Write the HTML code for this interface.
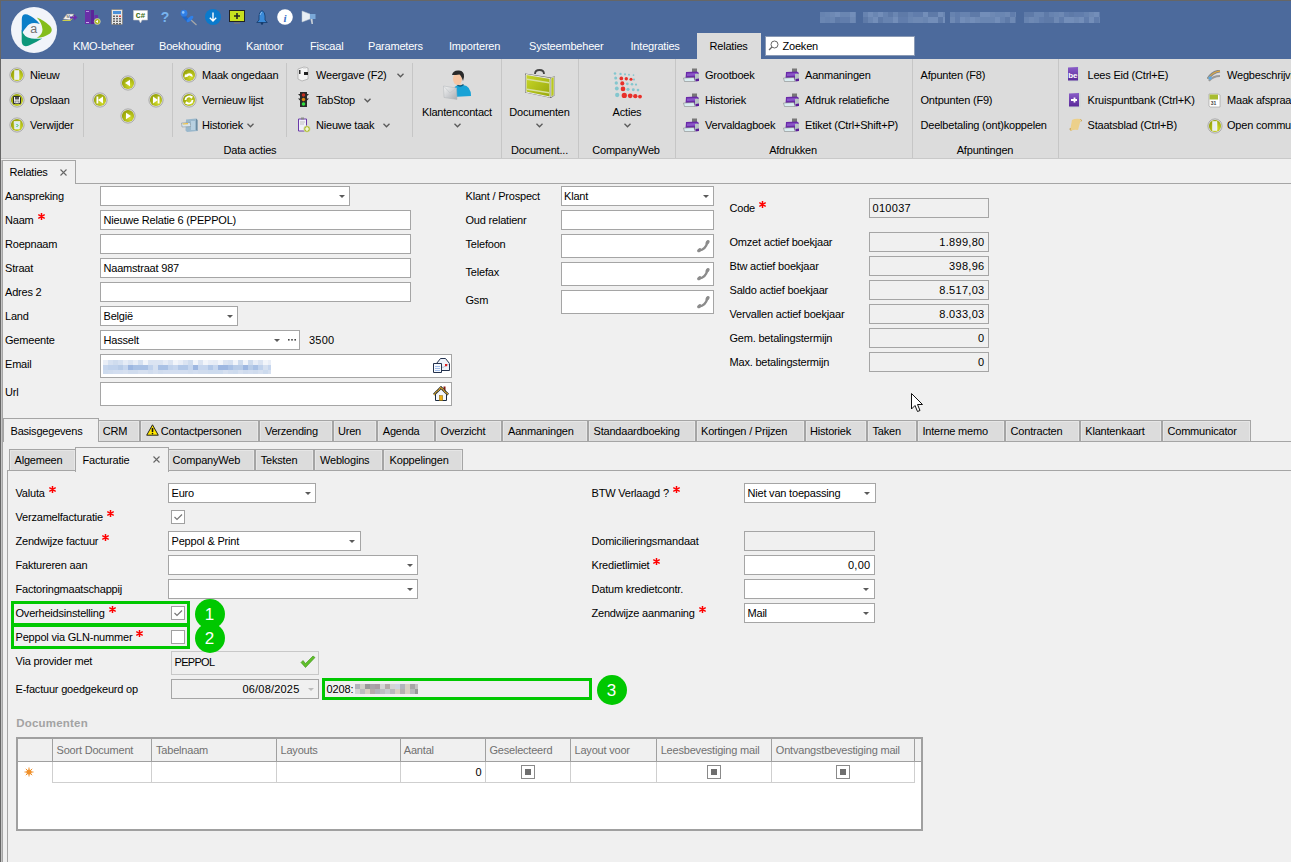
<!DOCTYPE html><html><head><meta charset="utf-8"><style>
*{margin:0;padding:0;box-sizing:content-box}
html,body{width:1291px;height:862px;overflow:hidden;background:#f0f0f0}
body{position:relative;font-family:"Liberation Sans",sans-serif;font-size:11px;color:#000}
div,svg{position:absolute}
.t{white-space:nowrap;line-height:12px;letter-spacing:-0.2px}
.w{color:#fff}
.inp{border:1px solid #a5a5a5;background:#fff}
.arr{width:0;height:0;border-left:3.5px solid transparent;border-right:3.5px solid transparent;border-top:3.5px solid #555}
.st{position:relative;display:inline-block;top:-4px;margin-left:4px;vertical-align:baseline}
.ic{position:absolute}
</style></head><body>
<svg style="left:0;top:0" width="0" height="0"><defs>
<radialGradient id="olv" cx="0.65" cy="0.7" r="0.8"><stop offset="0" stop-color="#d2dc2c"/><stop offset="1" stop-color="#8e9a05"/></radialGradient>
<linearGradient id="ring" x1="0" y1="0" x2="1" y2="1"><stop offset="0" stop-color="#c8c8c8"/><stop offset="1" stop-color="#9a9a9a"/></linearGradient>
<linearGradient id="purp" x1="0" y1="0" x2="0" y2="1"><stop offset="0" stop-color="#8a5cc8"/><stop offset="1" stop-color="#5a2a9a"/></linearGradient>
<linearGradient id="brief" x1="0" y1="0" x2="1" y2="1"><stop offset="0" stop-color="#cad82a"/><stop offset="1" stop-color="#98a80c"/></linearGradient>
<linearGradient id="env" x1="0" y1="0" x2="1" y2="1"><stop offset="0" stop-color="#f4f4f4"/><stop offset="1" stop-color="#a9adb2"/></linearGradient>
<linearGradient id="chk" x1="0" y1="0" x2="1" y2="1"><stop offset="0" stop-color="#9ae27a"/><stop offset="1" stop-color="#28a80e"/></linearGradient>
</defs></svg>
<div style="left:0px;top:0px;width:1291px;height:59px;background:#4c6a9c"></div>
<div style="left:0px;top:0px;width:1291px;height:1px;background:#666"></div>
<div style="left:0px;top:0px;width:1px;height:862px;background:#666"></div>
<svg style="left:11px;top:7px" width="46" height="46" viewBox="0 0 46 46"><circle cx="23" cy="23" r="23" fill="#f1f4fa"/><path d="M10.8 26.8 L10.8 12 Q10.8 6.2 16.5 7.6 Q23.5 10.5 28.8 17 Q19.5 14 15.5 20 Q12.3 23.5 10.8 26.8 Z" fill="#0a7dc8"/><path d="M25.7 10.4 Q33 13 39 19 Q42.5 23 39 26.5 Q33 30.5 25.7 31 Q31.5 27.5 31.5 22.5 Q31 15.5 25.7 10.4 Z" fill="#84bd1c"/><path d="M10.7 22.5 Q12.5 30.5 20.5 31.5 Q26 32 31.3 31.6 Q24 36 18 38.5 Q10.7 41 10.7 34 Z" fill="#0d977b"/><text x="22.8" y="26.3" font-family="Liberation Sans" font-size="12.5" fill="#707070" text-anchor="middle">a</text></svg>
<svg style="left:61px;top:12px" width="17" height="11" viewBox="0 0 17 11"><path d="M2 7 L6 2 H13 L9 8 Z" fill="#f4f4f4" stroke="#888" stroke-width=".6"/><path d="M1.5 8.5 H9.5 L13 4" stroke="#cdd04a" stroke-width="1" fill="none"/><text x="5.5" y="6" font-size="4" font-family="Liberation Sans" fill="#333">M</text><path d="M9 4.5 H13 V2.5 L16.5 5.5 L13 8.5 V6.5 H9 Z" fill="#6b2fb0"/></svg><svg style="left:85px;top:10px" width="16" height="15" viewBox="0 0 16 15"><rect x="0" y="0" width="5" height="14" fill="#6a2fa8"/><rect x="5.5" y="0" width="3.5" height="14" fill="#5a2598"/><rect x="9.5" y="5" width="3.5" height="9" fill="#6a2fa8"/><rect x="1" y="1" width="3" height=".8" fill="#c8b0e8"/><rect x="1" y="12" width="3" height="1" fill="#c8b0e8"/><circle cx="12.3" cy="11.5" r="3" fill="#a8b820" stroke="#ddd" stroke-width=".6"/><path d="M10.5 11.5 L13 10 V13 Z" fill="#fff"/></svg><svg style="left:111px;top:9px" width="12" height="16" viewBox="0 0 12 16"><rect x=".5" y=".5" width="11" height="15" rx="1" fill="#e6e6e6" stroke="#8a8a8a"/><rect x="2" y="2" width="8" height="3" fill="#4a90d8"/><rect x="2" y="6.5" width="2" height="1.5" fill="#666"/><rect x="5" y="6.5" width="2" height="1.5" fill="#666"/><rect x="8" y="6.5" width="2" height="1.5" fill="#e04040"/><rect x="2" y="9.0" width="2" height="1.5" fill="#666"/><rect x="5" y="9.0" width="2" height="1.5" fill="#666"/><rect x="8" y="9.0" width="2" height="1.5" fill="#666"/><rect x="2" y="11.5" width="2" height="1.5" fill="#666"/><rect x="5" y="11.5" width="2" height="1.5" fill="#666"/><rect x="8" y="11.5" width="2" height="1.5" fill="#666"/><rect x="2" y="14.0" width="2" height="1.5" fill="#666"/><rect x="5" y="14.0" width="2" height="1.5" fill="#666"/><rect x="8" y="14.0" width="2" height="1.5" fill="#666"/></svg><svg style="left:133px;top:10px" width="15" height="14" viewBox="0 0 15 14"><path d="M.5 .5 H14.5 V10 H9 L7.5 13 L6 10 H.5 Z" fill="#fff" stroke="#c8c8c8" stroke-width=".6"/><text x="7.5" y="8.3" font-size="8" font-weight="bold" font-family="Liberation Mono" fill="#3c6a12" style="-webkit-font-smoothing:antialiased" text-anchor="middle">C#</text></svg><svg style="left:160px;top:9px" width="10" height="14" viewBox="0 0 10 14"><text x="5" y="12.5" font-size="14" font-weight="bold" font-family="Liberation Sans" fill="#78b4f0" text-anchor="middle">?</text></svg><svg style="left:180px;top:9px" width="18" height="17" viewBox="0 0 18 17"><path d="M10.5 10.5 L16.5 16" stroke="#a8a8a8" stroke-width="1.2"/><path d="M3.2 6.8 L8.8 12.4" stroke="#1f66c8" stroke-width="3.2"/><ellipse cx="10" cy="10" rx="4.2" ry="1.8" transform="rotate(-45 10 10)" fill="#2f80e8"/><circle cx="4" cy="4.2" r="3.4" fill="#2f7ee6"/><circle cx="3.2" cy="3.4" r="1.3" fill="#8cc4ff"/></svg><svg style="left:205px;top:9px" width="16" height="16" viewBox="0 0 16 16"><circle cx="8" cy="8" r="8" fill="#0a7acc"/><path d="M8 3.5 V12 M4.8 8.8 L8 12 L11.2 8.8" stroke="#fff" stroke-width="1.4" fill="none"/></svg><svg style="left:229px;top:10px" width="16" height="14" viewBox="0 0 16 14"><rect x=".5" y=".5" width="15" height="11" fill="#c8e020" stroke="#222" stroke-width="1"/><path d="M8 3 V9 M5 6 H11" stroke="#222" stroke-width="1.6"/><rect x="5" y="12.5" width="6" height="1.3" fill="#777"/></svg><svg style="left:256px;top:10px" width="12" height="15" viewBox="0 0 12 15"><path d="M6 0.5 Q3 2 3 6 V10 L.8 12.5 H11.2 L9 10 V6 Q9 2 6 0.5 Z" fill="#3a8ad8" stroke="#143a6a" stroke-width=".8"/><path d="M4 5 Q4.5 3 6 2.2" stroke="#a8d0f8" stroke-width=".8" fill="none"/><circle cx="6" cy="13.5" r="1.2" fill="#143a6a"/></svg><svg style="left:277px;top:9px" width="16" height="16" viewBox="0 0 16 16"><circle cx="8" cy="8" r="7.8" fill="#fff"/><text x="8" y="12.5" font-size="11" font-style="italic" font-weight="bold" font-family="Liberation Serif" fill="#3a70c8" text-anchor="middle">i</text></svg><svg style="left:301px;top:9px" width="16" height="16" viewBox="0 0 16 16"><path d="M1 2 L9 5 V10 L1 13 Z" fill="#e8eef4" stroke="#b8c4d0" stroke-width=".5"/><path d="M9 5 H14.5 V10 H9 Z" fill="#7aa8d8"/><path d="M9.5 10 L10.5 15 H12 L11.5 10 Z" fill="#c8d0d8"/></svg>
<div style="left:820px;top:12px;width:5px;height:5px;background:rgba(175,198,230,0.28)"></div><div style="left:820px;top:17px;width:5px;height:6px;background:rgba(175,198,230,0.3)"></div><div style="left:825px;top:12px;width:5px;height:5px;background:rgba(175,198,230,0.3)"></div><div style="left:825px;top:17px;width:5px;height:6px;background:rgba(175,198,230,0.28)"></div><div style="left:830px;top:12px;width:5px;height:5px;background:rgba(175,198,230,0.34)"></div><div style="left:830px;top:17px;width:5px;height:6px;background:rgba(175,198,230,0.3)"></div><div style="left:835px;top:12px;width:5px;height:5px;background:rgba(175,198,230,0.4)"></div><div style="left:835px;top:17px;width:5px;height:6px;background:rgba(175,198,230,0.18)"></div><div style="left:840px;top:12px;width:5px;height:5px;background:rgba(175,198,230,0.3)"></div><div style="left:840px;top:17px;width:5px;height:6px;background:rgba(175,198,230,0.22)"></div><div style="left:845px;top:12px;width:5px;height:5px;background:rgba(175,198,230,0.3)"></div><div style="left:845px;top:17px;width:5px;height:6px;background:rgba(175,198,230,0.22)"></div><div style="left:850px;top:12px;width:5px;height:5px;background:rgba(175,198,230,0.4)"></div><div style="left:850px;top:17px;width:5px;height:6px;background:rgba(175,198,230,0.34)"></div><div style="left:855px;top:12px;width:1px;height:5px;background:rgba(175,198,230,0.3)"></div><div style="left:855px;top:17px;width:1px;height:6px;background:rgba(175,198,230,0.28)"></div><div style="left:863px;top:12px;width:5px;height:5px;background:rgba(175,198,230,0.28)"></div><div style="left:863px;top:17px;width:5px;height:6px;background:rgba(175,198,230,0.18)"></div><div style="left:868px;top:12px;width:5px;height:5px;background:rgba(175,198,230,0.4)"></div><div style="left:868px;top:17px;width:5px;height:6px;background:rgba(175,198,230,0.3)"></div><div style="left:873px;top:12px;width:5px;height:5px;background:rgba(175,198,230,0.3)"></div><div style="left:873px;top:17px;width:5px;height:6px;background:rgba(175,198,230,0.4)"></div><div style="left:878px;top:12px;width:5px;height:5px;background:rgba(175,198,230,0.4)"></div><div style="left:878px;top:17px;width:5px;height:6px;background:rgba(175,198,230,0.18)"></div><div style="left:883px;top:12px;width:5px;height:5px;background:rgba(175,198,230,0.28)"></div><div style="left:883px;top:17px;width:5px;height:6px;background:rgba(175,198,230,0.28)"></div><div style="left:888px;top:12px;width:5px;height:5px;background:rgba(175,198,230,0.18)"></div><div style="left:888px;top:17px;width:5px;height:6px;background:rgba(175,198,230,0.28)"></div><div style="left:893px;top:12px;width:5px;height:5px;background:rgba(175,198,230,0.3)"></div><div style="left:893px;top:17px;width:5px;height:6px;background:rgba(175,198,230,0.4)"></div><div style="left:898px;top:12px;width:5px;height:5px;background:rgba(175,198,230,0.18)"></div><div style="left:898px;top:17px;width:5px;height:6px;background:rgba(175,198,230,0.22)"></div><div style="left:903px;top:12px;width:5px;height:5px;background:rgba(175,198,230,0.18)"></div><div style="left:903px;top:17px;width:5px;height:6px;background:rgba(175,198,230,0.22)"></div><div style="left:908px;top:12px;width:5px;height:5px;background:rgba(175,198,230,0.28)"></div><div style="left:908px;top:17px;width:5px;height:6px;background:rgba(175,198,230,0.3)"></div><div style="left:913px;top:12px;width:5px;height:5px;background:rgba(175,198,230,0.22)"></div><div style="left:913px;top:17px;width:5px;height:6px;background:rgba(175,198,230,0.34)"></div><div style="left:918px;top:12px;width:5px;height:5px;background:rgba(175,198,230,0.22)"></div><div style="left:918px;top:17px;width:5px;height:6px;background:rgba(175,198,230,0.34)"></div><div style="left:923px;top:12px;width:5px;height:5px;background:rgba(175,198,230,0.4)"></div><div style="left:923px;top:17px;width:5px;height:6px;background:rgba(175,198,230,0.3)"></div><div style="left:928px;top:12px;width:5px;height:5px;background:rgba(175,198,230,0.18)"></div><div style="left:928px;top:17px;width:5px;height:6px;background:rgba(175,198,230,0.4)"></div><div style="left:933px;top:12px;width:5px;height:5px;background:rgba(175,198,230,0.18)"></div><div style="left:933px;top:17px;width:5px;height:6px;background:rgba(175,198,230,0.4)"></div><div style="left:938px;top:12px;width:5px;height:5px;background:rgba(175,198,230,0.4)"></div><div style="left:938px;top:17px;width:5px;height:6px;background:rgba(175,198,230,0.18)"></div><div style="left:943px;top:12px;width:2px;height:5px;background:rgba(175,198,230,0.3)"></div><div style="left:943px;top:17px;width:2px;height:6px;background:rgba(175,198,230,0.4)"></div><div style="left:950px;top:12px;width:5px;height:5px;background:rgba(175,198,230,0.28)"></div><div style="left:950px;top:17px;width:5px;height:6px;background:rgba(175,198,230,0.34)"></div><div style="left:955px;top:12px;width:5px;height:5px;background:rgba(175,198,230,0.22)"></div><div style="left:955px;top:17px;width:5px;height:6px;background:rgba(175,198,230,0.22)"></div><div style="left:960px;top:12px;width:5px;height:5px;background:rgba(175,198,230,0.28)"></div><div style="left:960px;top:17px;width:5px;height:6px;background:rgba(175,198,230,0.4)"></div><div style="left:965px;top:12px;width:5px;height:5px;background:rgba(175,198,230,0.28)"></div><div style="left:965px;top:17px;width:5px;height:6px;background:rgba(175,198,230,0.34)"></div><div style="left:970px;top:12px;width:5px;height:5px;background:rgba(175,198,230,0.18)"></div><div style="left:970px;top:17px;width:5px;height:6px;background:rgba(175,198,230,0.4)"></div><div style="left:975px;top:12px;width:5px;height:5px;background:rgba(175,198,230,0.18)"></div><div style="left:975px;top:17px;width:5px;height:6px;background:rgba(175,198,230,0.34)"></div><div style="left:980px;top:12px;width:5px;height:5px;background:rgba(175,198,230,0.4)"></div><div style="left:980px;top:17px;width:5px;height:6px;background:rgba(175,198,230,0.3)"></div><div style="left:985px;top:12px;width:5px;height:5px;background:rgba(175,198,230,0.4)"></div><div style="left:985px;top:17px;width:5px;height:6px;background:rgba(175,198,230,0.3)"></div><div style="left:990px;top:12px;width:5px;height:5px;background:rgba(175,198,230,0.34)"></div><div style="left:990px;top:17px;width:5px;height:6px;background:rgba(175,198,230,0.3)"></div><div style="left:995px;top:12px;width:5px;height:5px;background:rgba(175,198,230,0.3)"></div><div style="left:995px;top:17px;width:5px;height:6px;background:rgba(175,198,230,0.4)"></div><div style="left:1000px;top:12px;width:5px;height:5px;background:rgba(175,198,230,0.3)"></div><div style="left:1000px;top:17px;width:5px;height:6px;background:rgba(175,198,230,0.28)"></div><div style="left:1005px;top:12px;width:5px;height:5px;background:rgba(175,198,230,0.34)"></div><div style="left:1005px;top:17px;width:5px;height:6px;background:rgba(175,198,230,0.18)"></div><div style="left:1010px;top:12px;width:5px;height:5px;background:rgba(175,198,230,0.22)"></div><div style="left:1010px;top:17px;width:5px;height:6px;background:rgba(175,198,230,0.34)"></div><div style="left:1015px;top:12px;width:1px;height:5px;background:rgba(175,198,230,0.3)"></div><div style="left:1015px;top:17px;width:1px;height:6px;background:rgba(175,198,230,0.18)"></div><div style="left:1024px;top:12px;width:5px;height:5px;background:rgba(175,198,230,0.18)"></div><div style="left:1024px;top:17px;width:5px;height:6px;background:rgba(175,198,230,0.28)"></div><div style="left:1029px;top:12px;width:5px;height:5px;background:rgba(175,198,230,0.18)"></div><div style="left:1029px;top:17px;width:5px;height:6px;background:rgba(175,198,230,0.34)"></div><div style="left:1034px;top:12px;width:5px;height:5px;background:rgba(175,198,230,0.3)"></div><div style="left:1034px;top:17px;width:5px;height:6px;background:rgba(175,198,230,0.3)"></div><div style="left:1039px;top:12px;width:5px;height:5px;background:rgba(175,198,230,0.3)"></div><div style="left:1039px;top:17px;width:5px;height:6px;background:rgba(175,198,230,0.22)"></div><div style="left:1044px;top:12px;width:5px;height:5px;background:rgba(175,198,230,0.18)"></div><div style="left:1044px;top:17px;width:5px;height:6px;background:rgba(175,198,230,0.18)"></div><div style="left:1049px;top:12px;width:5px;height:5px;background:rgba(175,198,230,0.28)"></div><div style="left:1049px;top:17px;width:5px;height:6px;background:rgba(175,198,230,0.18)"></div><div style="left:1054px;top:12px;width:5px;height:5px;background:rgba(175,198,230,0.3)"></div><div style="left:1054px;top:17px;width:5px;height:6px;background:rgba(175,198,230,0.34)"></div><div style="left:1059px;top:12px;width:5px;height:5px;background:rgba(175,198,230,0.34)"></div><div style="left:1059px;top:17px;width:5px;height:6px;background:rgba(175,198,230,0.22)"></div><div style="left:1064px;top:12px;width:5px;height:5px;background:rgba(175,198,230,0.22)"></div><div style="left:1064px;top:17px;width:5px;height:6px;background:rgba(175,198,230,0.4)"></div><div style="left:1069px;top:12px;width:5px;height:5px;background:rgba(175,198,230,0.18)"></div><div style="left:1069px;top:17px;width:5px;height:6px;background:rgba(175,198,230,0.4)"></div><div style="left:1074px;top:12px;width:5px;height:5px;background:rgba(175,198,230,0.22)"></div><div style="left:1074px;top:17px;width:5px;height:6px;background:rgba(175,198,230,0.34)"></div><div style="left:1079px;top:12px;width:5px;height:5px;background:rgba(175,198,230,0.22)"></div><div style="left:1079px;top:17px;width:5px;height:6px;background:rgba(175,198,230,0.4)"></div><div style="left:1084px;top:12px;width:5px;height:5px;background:rgba(175,198,230,0.28)"></div><div style="left:1084px;top:17px;width:5px;height:6px;background:rgba(175,198,230,0.22)"></div><div style="left:1089px;top:12px;width:5px;height:5px;background:rgba(175,198,230,0.34)"></div><div style="left:1089px;top:17px;width:5px;height:6px;background:rgba(175,198,230,0.4)"></div><div style="left:1094px;top:12px;width:5px;height:5px;background:rgba(175,198,230,0.4)"></div><div style="left:1094px;top:17px;width:5px;height:6px;background:rgba(175,198,230,0.22)"></div><div style="left:1099px;top:12px;width:1px;height:5px;background:rgba(175,198,230,0.22)"></div><div style="left:1099px;top:17px;width:1px;height:6px;background:rgba(175,198,230,0.3)"></div>
<div class="t" style="left:73px;top:40px;color:#fff">KMO-beheer</div>
<div class="t" style="left:159px;top:40px;color:#fff">Boekhouding</div>
<div class="t" style="left:246px;top:40px;color:#fff">Kantoor</div>
<div class="t" style="left:310px;top:40px;color:#fff">Fiscaal</div>
<div class="t" style="left:368px;top:40px;color:#fff">Parameters</div>
<div class="t" style="left:449px;top:40px;color:#fff">Importeren</div>
<div class="t" style="left:529px;top:40px;color:#fff">Systeembeheer</div>
<div class="t" style="left:630.5px;top:40px;color:#fff">Integraties</div>
<div style="left:697px;top:33px;width:64px;height:26px;background:#dcdcdc"></div>
<div class="t" style="left:709.5px;top:40px;">Relaties</div>
<div style="left:765px;top:36px;width:148px;height:18px;background:#fff;border:1px solid #8a9ab5"></div>
<svg style="left:768px;top:40px" width="11" height="11"><circle cx="6.5" cy="4.5" r="3.5" fill="none" stroke="#666" stroke-width="1"/><path d="M4 7 L1 10" stroke="#666" stroke-width="1.3"/></svg>
<div class="t" style="left:782.5px;top:40px;">Zoeken</div>
<div style="left:1px;top:59px;width:1290px;height:99px;background:#dcdcdc"></div>
<div style="left:1px;top:158px;width:1290px;height:1px;background:#c9c9c9"></div>
<div style="left:501px;top:59px;width:1px;height:99px;background:#c6c6c6"></div>
<div style="left:578px;top:59px;width:1px;height:99px;background:#c6c6c6"></div>
<div style="left:675px;top:59px;width:1px;height:99px;background:#c6c6c6"></div>
<div style="left:912px;top:59px;width:1px;height:99px;background:#c6c6c6"></div>
<div style="left:1058px;top:59px;width:1px;height:99px;background:#c6c6c6"></div>
<div style="left:83px;top:63px;width:1px;height:74px;background:#c6c6c6"></div>
<div style="left:172px;top:63px;width:1px;height:74px;background:#c6c6c6"></div>
<div style="left:286px;top:63px;width:1px;height:74px;background:#c6c6c6"></div>
<div style="left:412px;top:63px;width:1px;height:74px;background:#c6c6c6"></div>
<div class="t" style="left:150.0px;top:144px;width:200px;text-align:center;">Data acties</div>
<div class="t" style="left:439.5px;top:144px;width:200px;text-align:center;">Document...</div>
<div class="t" style="left:526.0px;top:144px;width:200px;text-align:center;">CompanyWeb</div>
<div class="t" style="left:693.0px;top:144px;width:200px;text-align:center;">Afdrukken</div>
<div class="t" style="left:885.0px;top:144px;width:200px;text-align:center;">Afpuntingen</div>
<div class="t" style="left:30px;top:69px;">Nieuw</div>
<div class="t" style="left:30px;top:94px;">Opslaan</div>
<div class="t" style="left:30px;top:119px;">Verwijder</div>
<div class="t" style="left:202px;top:69px;">Maak ongedaan</div>
<div class="t" style="left:202px;top:94px;">Vernieuw lijst</div>
<div class="t" style="left:202px;top:119px;">Historiek</div>
<svg class="ic" style="left:246.5px;top:122.5px" width="7" height="5"><path d="M0.5 0.8 L3.5 3.8 L6.5 0.8" fill="none" stroke="#5a5a5a" stroke-width="1.3"/></svg>
<div class="t" style="left:316px;top:69px;">Weergave (F2)</div>
<div class="t" style="left:316px;top:94px;">TabStop</div>
<div class="t" style="left:316px;top:119px;">Nieuwe taak</div>
<svg class="ic" style="left:396.5px;top:72.5px" width="7" height="5"><path d="M0.5 0.8 L3.5 3.8 L6.5 0.8" fill="none" stroke="#5a5a5a" stroke-width="1.3"/></svg>
<svg class="ic" style="left:363.5px;top:97.5px" width="7" height="5"><path d="M0.5 0.8 L3.5 3.8 L6.5 0.8" fill="none" stroke="#5a5a5a" stroke-width="1.3"/></svg>
<svg class="ic" style="left:382.5px;top:122.5px" width="7" height="5"><path d="M0.5 0.8 L3.5 3.8 L6.5 0.8" fill="none" stroke="#5a5a5a" stroke-width="1.3"/></svg>
<div class="t" style="left:357.0px;top:106px;width:200px;text-align:center;">Klantencontact</div>
<svg class="ic" style="left:453.5px;top:122.5px" width="7" height="5"><path d="M0.5 0.8 L3.5 3.8 L6.5 0.8" fill="none" stroke="#5a5a5a" stroke-width="1.3"/></svg>
<div class="t" style="left:439.5px;top:106px;width:200px;text-align:center;">Documenten</div>
<svg class="ic" style="left:536.0px;top:122.5px" width="7" height="5"><path d="M0.5 0.8 L3.5 3.8 L6.5 0.8" fill="none" stroke="#5a5a5a" stroke-width="1.3"/></svg>
<div class="t" style="left:527.0px;top:106px;width:200px;text-align:center;">Acties</div>
<svg class="ic" style="left:623.5px;top:122.5px" width="7" height="5"><path d="M0.5 0.8 L3.5 3.8 L6.5 0.8" fill="none" stroke="#5a5a5a" stroke-width="1.3"/></svg>
<div class="t" style="left:705px;top:69px;">Grootboek</div>
<div class="t" style="left:705px;top:94px;">Historiek</div>
<div class="t" style="left:705px;top:119px;">Vervaldagboek</div>
<div class="t" style="left:805px;top:69px;">Aanmaningen</div>
<div class="t" style="left:805px;top:94px;">Afdruk relatiefiche</div>
<div class="t" style="left:805px;top:119px;">Etiket (Ctrl+Shift+P)</div>
<div class="t" style="left:920.5px;top:69px;">Afpunten (F8)</div>
<div class="t" style="left:920.5px;top:94px;">Ontpunten (F9)</div>
<div class="t" style="left:920.5px;top:119px;">Deelbetaling (ont)koppelen</div>
<div class="t" style="left:1087.5px;top:69px;">Lees Eid (Ctrl+E)</div>
<div class="t" style="left:1087.5px;top:94px;">Kruispuntbank (Ctrl+K)</div>
<div class="t" style="left:1087.5px;top:119px;">Staatsblad (Ctrl+B)</div>
<div class="t" style="left:1227px;top:69px;">Wegbeschrijving</div>
<div class="t" style="left:1227px;top:94px;">Maak afspraak</div>
<div class="t" style="left:1227px;top:119px;">Open communicator</div>
<svg style="left:9px;top:67px" width="16" height="16" viewBox="0 0 16 16"><circle cx="8" cy="8" r="7.1" fill="#e4e4e4" stroke="#a8a8a8" stroke-width="1"/><circle cx="8" cy="8" r="6.1" fill="url(#olv)"/><path d="M5.5 3.5 H10 V12.5 H5.5 Z" fill="#e8eef4" stroke="#fff" stroke-width=".5"/></svg><svg style="left:9px;top:92px" width="16" height="16" viewBox="0 0 16 16"><circle cx="8" cy="8" r="7.1" fill="#e4e4e4" stroke="#a8a8a8" stroke-width="1"/><circle cx="8" cy="8" r="6.1" fill="url(#olv)"/><path d="M4.5 4.5 H10.5 L11.5 5.5 V11.5 H4.5 Z" fill="#f2f2f2" stroke="#2a2a2a" stroke-width="1"/><rect x="6" y="5" width="4" height="2.5" fill="#555"/><rect x="6" y="9" width="4" height="2.5" fill="#ddd" stroke="#444" stroke-width=".5"/></svg><svg style="left:9px;top:117px" width="16" height="16" viewBox="0 0 16 16"><circle cx="8" cy="8" r="7.1" fill="#e4e4e4" stroke="#a8a8a8" stroke-width="1"/><circle cx="8" cy="8" r="6.1" fill="url(#olv)"/><path d="M5 4.5 H11 L10.3 12 H5.7 Z" fill="#d8ecf8" stroke="#f8f8f8" stroke-width=".6"/><path d="M7.5 7 L9 8.5 L7.5 10" stroke="#3cb83c" stroke-width="1" fill="none"/></svg><svg style="left:120px;top:75px" width="16" height="16" viewBox="0 0 16 16"><circle cx="8" cy="8" r="7.1" fill="#e4e4e4" stroke="#a8a8a8" stroke-width="1"/><circle cx="8" cy="8" r="6.1" fill="url(#olv)"/><path d="M5 8 L10 4.8 V11.2 Z" fill="#fff"/></svg><svg style="left:92px;top:92px" width="16" height="16" viewBox="0 0 16 16"><circle cx="8" cy="8" r="7.1" fill="#e4e4e4" stroke="#a8a8a8" stroke-width="1"/><circle cx="8" cy="8" r="6.1" fill="url(#olv)"/><rect x="4.5" y="4.5" width="1.8" height="7" fill="#fff"/><path d="M6 8 L11 4.5 V11.5 Z" fill="#fff"/></svg><svg style="left:148px;top:92px" width="16" height="16" viewBox="0 0 16 16"><circle cx="8" cy="8" r="7.1" fill="#e4e4e4" stroke="#a8a8a8" stroke-width="1"/><circle cx="8" cy="8" r="6.1" fill="url(#olv)"/><rect x="9.7" y="4.5" width="1.8" height="7" fill="#fff"/><path d="M10 8 L5 4.5 V11.5 Z" fill="#fff"/></svg><svg style="left:120px;top:108px" width="16" height="16" viewBox="0 0 16 16"><circle cx="8" cy="8" r="7.1" fill="#e4e4e4" stroke="#a8a8a8" stroke-width="1"/><circle cx="8" cy="8" r="6.1" fill="url(#olv)"/><path d="M11 8 L6 4.8 V11.2 Z" fill="#fff"/></svg><svg style="left:181px;top:67px" width="16" height="16" viewBox="0 0 16 16"><circle cx="8" cy="8" r="7.1" fill="#e4e4e4" stroke="#a8a8a8" stroke-width="1"/><circle cx="8" cy="8" r="6.1" fill="url(#olv)"/><path d="M4 9 Q6 5.5 9.5 6.5 Q12 7.5 11.5 10 L9.5 9 Q8.5 8 6.5 9.5 Z" fill="#fff"/><path d="M3.5 10.5 L4 7 L7 9.5 Z" fill="#fff"/></svg><svg style="left:181px;top:92px" width="16" height="16" viewBox="0 0 16 16"><circle cx="8" cy="8" r="7.1" fill="#e4e4e4" stroke="#a8a8a8" stroke-width="1"/><circle cx="8" cy="8" r="6.1" fill="url(#olv)"/><path d="M4.5 8 A3.5 3.5 0 0 1 10.5 5.5" stroke="#fff" stroke-width="1.8" fill="none"/><path d="M11.5 8 A3.5 3.5 0 0 1 5.5 10.5" stroke="#fff" stroke-width="1.8" fill="none"/><path d="M9 3.5 L12 4.5 L10.5 7 Z M7 12.5 L4 11.5 L5.5 9 Z" fill="#fff"/></svg><svg style="left:181px;top:118px" width="17" height="15" viewBox="0 0 17 15"><path d="M5 1.5 L15 0.5 L16.5 2 V13 L6 14 L4.5 12.5 Z" fill="#9ab8cc"/><path d="M15 0.5 L16.5 2 V13 L15 12 Z" fill="#6a8aa0"/><path d="M0.5 5 L9 4.5 L10 8.5 L1 9 Z" fill="#d8e4ec" stroke="#7a8a94" stroke-width=".5"/><path d="M1.5 5.5 L7 5 V6.3 L2 6.6 Z" fill="#f0c040"/><rect x="10" y="3" width="4" height="9" fill="#b8d0e0"/></svg><svg style="left:296px;top:66px" width="14" height="16" viewBox="0 0 14 16"><path d="M2 3 L8 1 L12 2 V13 L6 15 L2 13 Z" fill="#f4f4f4" stroke="#999" stroke-width=".6"/><rect x="3" y="4" width="1.5" height="4" fill="#333"/><rect x="8" y="6" width="4" height="3" fill="#222"/><path d="M7 0.5 H10 V2.5 H7 Z" fill="#ccc"/></svg><svg style="left:298px;top:91px" width="11" height="17" viewBox="0 0 11 17"><path d="M2 1 H9 V16 H2 Z" fill="#2a2a2a"/><path d="M0 3 H2 V5 Z M11 3 H9 V5 Z M0 7.5 H2 V9.5 Z M11 7.5 H9 V9.5 Z" fill="#2a2a2a"/><circle cx="5.5" cy="4" r="1.7" fill="#c83020"/><circle cx="5.5" cy="8.5" r="1.7" fill="#e08a10"/><circle cx="5.5" cy="13" r="1.8" fill="#30e040"/></svg><svg style="left:297px;top:117px" width="14" height="16" viewBox="0 0 14 16"><path d="M1.5 2 H9.5 V14 H1.5 Z" fill="#f0f0f8" stroke="#6a3aa8" stroke-width="1"/><rect x="4" y=".5" width="3" height="2" fill="#888"/><path d="M3 5 H8 M3 7 H7" stroke="#aaa" stroke-width=".7"/><circle cx="10" cy="12" r="3.3" fill="#b0c030" stroke="#e0e0e0" stroke-width=".6"/><path d="M10 10 V14 M8 12 H12" stroke="#fff" stroke-width="1.2"/></svg><svg style="left:436px;top:64px" width="40" height="40" viewBox="0 0 40 40"><path d="M16.5 33 Q16 23 22 21 L27 21 Q35 22 35 32 Z" fill="#18a2d6"/><path d="M21 20.5 Q24 23.5 27.5 20.5" stroke="#0a5a80" stroke-width="1.2" fill="#f4c4a0"/><ellipse cx="21.5" cy="15" rx="4.5" ry="6" fill="#f6c6a4"/><path d="M16 11 Q17 6 23 6.5 Q28.5 7 28 13 L27 17 Q25.5 12 23.5 10.5 Q20 11 16 11 Z" fill="#2a2a2a"/><path d="M7.5 22 L20.5 24 L21 35.5 L8 33.5 Z" fill="url(#env)" stroke="#b0b4b8" stroke-width=".5"/><path d="M7.5 22 L14 29 L20.5 24" stroke="#c0c4c8" stroke-width=".6" fill="none"/></svg><svg style="left:519px;top:64px" width="40" height="40" viewBox="0 0 40 40"><path d="M16 10 Q16 6 20.5 6 Q25 6 25 10" stroke="#444" stroke-width="1.8" fill="none"/><path d="M6 9.5 L32 13.5 L35.5 12 L35.5 31.5 L32 34 L6 28.5 Z" fill="#666"/><path d="M7 10.5 L31 14.5 V33 L7 28 Z" fill="url(#brief)" stroke="#e8e8e8" stroke-width="1"/><path d="M32 14 L35 12.8 V31 L32 33 Z" fill="#b8c820" stroke="#ddd" stroke-width=".7"/><path d="M8 14.5 L30 18 V19.5 L8 16 Z M8 24.5 L30 28 V29.5 L8 26 Z" fill="#d8e0a0"/></svg><svg style="left:607px;top:64px" width="40" height="40" viewBox="0 0 40 40"><circle cx="8" cy="9.5" r="1.28" fill="#84c6ce"/><circle cx="13.5" cy="9.9" r="1.18" fill="#84c6ce"/><circle cx="18" cy="10.3" r="1.08" fill="#84c6ce"/><circle cx="22" cy="10.7" r="0.97" fill="#84c6ce"/><circle cx="26.5" cy="11.1" r="0.87" fill="#84c6ce"/><circle cx="8.7" cy="14.0" r="1.52" fill="#84c6ce"/><circle cx="14.3" cy="14.4" r="1.84" fill="#e8302a"/><circle cx="19.3" cy="14.8" r="1.68" fill="#e8302a"/><circle cx="24" cy="15.2" r="1.52" fill="#e8302a"/><circle cx="27" cy="15.6" r="1.03" fill="#84c6ce"/><circle cx="9.3" cy="19.0" r="1.68" fill="#84c6ce"/><circle cx="15.3" cy="19.4" r="2.03" fill="#e8302a"/><circle cx="20.3" cy="19.8" r="1.41" fill="#84c6ce"/><circle cx="25" cy="20.2" r="1.28" fill="#84c6ce"/><circle cx="29" cy="20.6" r="1.14" fill="#84c6ce"/><circle cx="9.8" cy="24.5" r="1.92" fill="#84c6ce"/><circle cx="16" cy="24.9" r="2.32" fill="#e8302a"/><circle cx="21" cy="25.3" r="1.61" fill="#84c6ce"/><circle cx="26.3" cy="25.7" r="1.46" fill="#84c6ce"/><circle cx="31" cy="26.1" r="1.31" fill="#84c6ce"/><circle cx="10.2" cy="31.0" r="2.16" fill="#84c6ce"/><circle cx="17.3" cy="31.4" r="2.61" fill="#e8302a"/><circle cx="23.2" cy="31.8" r="2.38" fill="#e8302a"/><circle cx="28.3" cy="32.2" r="2.15" fill="#e8302a"/><circle cx="33" cy="32.6" r="1.93" fill="#e8302a"/></svg><svg style="left:683px;top:68px" width="18" height="14" viewBox="0 0 18 14"><rect x="9" y="0.5" width="5" height="5" fill="#777"/><path d="M3 4 L14 3.5 L16 5 V12 L4 12.5 L2.5 11 Z" fill="#6a2aa8"/><path d="M4 5.5 L14 5 L14.5 7.5 L4 8 Z" fill="#8a56c8"/><path d="M0.5 10 L11 9.5 L12 13.5 L1.5 13.5 Z" fill="#d8ecf0" stroke="#777" stroke-width=".5"/><path d="M12 6 L16 5.5 V12.5 L12 13 Z" fill="#b8c4c4"/><path d="M12.5 11 L16 10.5 V13 L12.5 13.5 Z" fill="#5a1a98"/></svg><svg style="left:683px;top:93px" width="18" height="14" viewBox="0 0 18 14"><rect x="9" y="0.5" width="5" height="5" fill="#777"/><path d="M3 4 L14 3.5 L16 5 V12 L4 12.5 L2.5 11 Z" fill="#6a2aa8"/><path d="M4 5.5 L14 5 L14.5 7.5 L4 8 Z" fill="#8a56c8"/><path d="M0.5 10 L11 9.5 L12 13.5 L1.5 13.5 Z" fill="#d8ecf0" stroke="#777" stroke-width=".5"/><path d="M12 6 L16 5.5 V12.5 L12 13 Z" fill="#b8c4c4"/><path d="M12.5 11 L16 10.5 V13 L12.5 13.5 Z" fill="#5a1a98"/></svg><svg style="left:683px;top:118px" width="18" height="14" viewBox="0 0 18 14"><rect x="9" y="0.5" width="5" height="5" fill="#777"/><path d="M3 4 L14 3.5 L16 5 V12 L4 12.5 L2.5 11 Z" fill="#6a2aa8"/><path d="M4 5.5 L14 5 L14.5 7.5 L4 8 Z" fill="#8a56c8"/><path d="M0.5 10 L11 9.5 L12 13.5 L1.5 13.5 Z" fill="#d8ecf0" stroke="#777" stroke-width=".5"/><path d="M12 6 L16 5.5 V12.5 L12 13 Z" fill="#b8c4c4"/><path d="M12.5 11 L16 10.5 V13 L12.5 13.5 Z" fill="#5a1a98"/></svg><svg style="left:783px;top:68px" width="18" height="14" viewBox="0 0 18 14"><rect x="9" y="0.5" width="5" height="5" fill="#777"/><path d="M3 4 L14 3.5 L16 5 V12 L4 12.5 L2.5 11 Z" fill="#6a2aa8"/><path d="M4 5.5 L14 5 L14.5 7.5 L4 8 Z" fill="#8a56c8"/><path d="M0.5 10 L11 9.5 L12 13.5 L1.5 13.5 Z" fill="#d8ecf0" stroke="#777" stroke-width=".5"/><path d="M12 6 L16 5.5 V12.5 L12 13 Z" fill="#b8c4c4"/><path d="M12.5 11 L16 10.5 V13 L12.5 13.5 Z" fill="#5a1a98"/></svg><svg style="left:783px;top:93px" width="18" height="14" viewBox="0 0 18 14"><rect x="9" y="0.5" width="5" height="5" fill="#777"/><path d="M3 4 L14 3.5 L16 5 V12 L4 12.5 L2.5 11 Z" fill="#6a2aa8"/><path d="M4 5.5 L14 5 L14.5 7.5 L4 8 Z" fill="#8a56c8"/><path d="M0.5 10 L11 9.5 L12 13.5 L1.5 13.5 Z" fill="#d8ecf0" stroke="#777" stroke-width=".5"/><path d="M12 6 L16 5.5 V12.5 L12 13 Z" fill="#b8c4c4"/><path d="M12.5 11 L16 10.5 V13 L12.5 13.5 Z" fill="#5a1a98"/></svg><svg style="left:783px;top:118px" width="18" height="14" viewBox="0 0 18 14"><rect x="9" y="0.5" width="5" height="5" fill="#777"/><path d="M3 4 L14 3.5 L16 5 V12 L4 12.5 L2.5 11 Z" fill="#6a2aa8"/><path d="M4 5.5 L14 5 L14.5 7.5 L4 8 Z" fill="#8a56c8"/><path d="M0.5 10 L11 9.5 L12 13.5 L1.5 13.5 Z" fill="#d8ecf0" stroke="#777" stroke-width=".5"/><path d="M12 6 L16 5.5 V12.5 L12 13 Z" fill="#b8c4c4"/><path d="M12.5 11 L16 10.5 V13 L12.5 13.5 Z" fill="#5a1a98"/></svg><svg style="left:1067px;top:66px" width="14" height="17" viewBox="0 0 14 17"><path d="M1 1.5 L11 0.5 L12.5 2 V15.5 L2.5 16 L1 14.5 Z" fill="#d0d8d8"/><path d="M1 1.5 L11 1 V14.5 L1 14.5 Z" fill="url(#purp)"/><text x="5.8" y="11.5" font-size="8" font-weight="bold" font-family="Liberation Sans" fill="#fff" text-anchor="middle">be</text></svg><svg style="left:1068px;top:92px" width="14" height="17" viewBox="0 0 14 17"><path d="M1 1.5 L11 0.5 L12.5 2 V15.5 L2.5 16 L1 14.5 Z" fill="#d0d8d8"/><path d="M1 1.5 L11 1 V14.5 L1 14.5 Z" fill="url(#purp)"/><path d="M3 8 H9 M6.5 5.5 V10.5" stroke="#fff" stroke-width="1.8"/></svg><svg style="left:1068px;top:118px" width="15" height="14" viewBox="0 0 15 14"><path d="M4 2 Q7 0 13 1 L10 12 Q7 11 2 13 Z" fill="#ecd08a"/><path d="M3 12.5 Q1 11 2.5 10 M12.5 1.5 Q14.5 2 13 3.5" stroke="#c8a050" stroke-width="1" fill="none"/></svg><svg style="left:1207px;top:70px" width="14" height="12" viewBox="0 0 14 12"><path d="M1 9 Q5 2 13 1" stroke="#888" stroke-width="3" fill="none"/><path d="M1 9 Q5 2 13 1" stroke="#f0b030" stroke-width="1" fill="none"/><path d="M2 11 Q6 6 13 6" stroke="#999" stroke-width="2" fill="none"/><circle cx="3" cy="8" r="1.8" fill="#5aa8e8"/></svg><svg style="left:1208px;top:92px" width="13" height="16" viewBox="0 0 13 16"><path d="M1 2 H10 L12 3 V15 H2 L1 14 Z" fill="#fff" stroke="#999" stroke-width=".6"/><rect x="1.5" y="2.5" width="8.5" height="5" fill="#a8bc30"/><text x="5.5" y="13" font-size="5" font-weight="bold" font-family="Liberation Sans" fill="#444" text-anchor="middle">31</text></svg><svg style="left:1206.5px;top:117.5px" width="16" height="16" viewBox="0 0 16 16"><circle cx="8" cy="8" r="7.1" fill="#e4e4e4" stroke="#a8a8a8" stroke-width="1"/><circle cx="8" cy="8" r="6.1" fill="url(#olv)"/><path d="M5.5 3.5 H10 V12.5 H5.5 Z" fill="#e8eef4" stroke="#fff" stroke-width=".5"/></svg>
<div style="left:2px;top:160px;width:72px;height:23px;background:#f0f0f0;border:1px solid #a5a5a5;border-bottom:none"></div>
<div style="left:75px;top:183px;width:1216px;height:1px;background:#a5a5a5"></div>
<div class="t" style="left:9.5px;top:166px;">Relaties</div>
<svg style="left:59.5px;top:169px" width="7" height="7"><path d="M0.5 0.5 L6.5 6.5 M6.5 0.5 L0.5 6.5" stroke="#666" stroke-width="1.1"/></svg>
<div class="t" style="left:5px;top:190px;">Aanspreking</div>
<div class="t" style="left:5px;top:214px;">Naam<svg class="st" width="7" height="7" viewBox="0 0 7 7"><path d="M3.5 0 V7 M0.3 1.6 L6.7 5.4 M0.3 5.4 L6.7 1.6" stroke="#f00" stroke-width="1.5"/></svg></div>
<div class="t" style="left:5px;top:238px;">Roepnaam</div>
<div class="t" style="left:5px;top:262px;">Straat</div>
<div class="t" style="left:5px;top:286px;">Adres 2</div>
<div class="t" style="left:5px;top:310px;">Land</div>
<div class="t" style="left:5px;top:334px;">Gemeente</div>
<div class="t" style="left:5px;top:358px;">Email</div>
<div class="t" style="left:5px;top:386px;">Url</div>
<div class="inp" style="left:100px;top:186px;width:248px;height:18px;background:#fff;border-color:#a5a5a5"></div>
<div class="arr" style="left:338.5px;top:194.5px;border-top-color:#5a5a5a"></div>
<div class="inp" style="left:100px;top:210px;width:309px;height:18px;background:#fff;border-color:#a5a5a5"></div>
<div class="t" style="left:103.5px;top:214px;">Nieuwe Relatie 6 (PEPPOL)</div>
<div class="inp" style="left:100px;top:234px;width:309px;height:18px;background:#fff;border-color:#a5a5a5"></div>
<div class="inp" style="left:100px;top:258px;width:309px;height:18px;background:#fff;border-color:#a5a5a5"></div>
<div class="t" style="left:103.5px;top:262px;">Naamstraat 987</div>
<div class="inp" style="left:100px;top:282px;width:309px;height:18px;background:#fff;border-color:#a5a5a5"></div>
<div class="inp" style="left:100px;top:306px;width:136px;height:18px;background:#fff;border-color:#a5a5a5"></div>
<div class="t" style="left:103.5px;top:310px;">België</div>
<div class="arr" style="left:226.5px;top:314.5px;border-top-color:#5a5a5a"></div>
<div class="inp" style="left:100px;top:330px;width:198px;height:18px;background:#fff;border-color:#a5a5a5"></div>
<div class="t" style="left:103.5px;top:334px;">Hasselt</div>
<div class="arr" style="left:273.5px;top:338.5px;border-top-color:#5a5a5a"></div>
<svg style="left:288px;top:339px" width="9" height="2"><rect x="0" y="0" width="1.6" height="1.6" fill="#444"/><rect x="3.2" y="0" width="1.6" height="1.6" fill="#444"/><rect x="6.4" y="0" width="1.6" height="1.6" fill="#444"/></svg>
<div class="t" style="left:309px;top:334px;letter-spacing:0.2px">3500</div>
<div class="inp" style="left:100px;top:354px;width:350px;height:22px;background:#fff;border-color:#a5a5a5"></div>
<div style="left:103px;top:360px;width:5px;height:5px;background:#e9eef7"></div><div style="left:103px;top:365px;width:5px;height:5px;background:#c6d6ee"></div><div style="left:103px;top:370px;width:5px;height:4px;background:#cddbee"></div><div style="left:108px;top:360px;width:5px;height:5px;background:#d6e1f1"></div><div style="left:108px;top:365px;width:5px;height:5px;background:#c0d2ec"></div><div style="left:108px;top:370px;width:5px;height:4px;background:#d0dcee"></div><div style="left:113px;top:360px;width:5px;height:5px;background:#cfdcee"></div><div style="left:113px;top:365px;width:5px;height:5px;background:#c0d2ec"></div><div style="left:113px;top:370px;width:5px;height:4px;background:#d3def0"></div><div style="left:118px;top:360px;width:5px;height:5px;background:#d6e1f1"></div><div style="left:118px;top:365px;width:5px;height:5px;background:#b8cce8"></div><div style="left:118px;top:370px;width:5px;height:4px;background:#d3def0"></div><div style="left:123px;top:360px;width:5px;height:5px;background:#e6ecf6"></div><div style="left:123px;top:365px;width:5px;height:5px;background:#c6d6ee"></div><div style="left:123px;top:370px;width:5px;height:4px;background:#d6e0f0"></div><div style="left:128px;top:360px;width:5px;height:5px;background:#dbe4f2"></div><div style="left:128px;top:365px;width:5px;height:5px;background:#9db7e1"></div><div style="left:128px;top:370px;width:5px;height:4px;background:#d0dcee"></div><div style="left:133px;top:360px;width:5px;height:5px;background:#e9eef7"></div><div style="left:133px;top:365px;width:5px;height:5px;background:#a9c1e5"></div><div style="left:133px;top:370px;width:5px;height:4px;background:#d0dcee"></div><div style="left:138px;top:360px;width:5px;height:5px;background:#d6e1f1"></div><div style="left:138px;top:365px;width:5px;height:5px;background:#a9c1e5"></div><div style="left:138px;top:370px;width:5px;height:4px;background:#d6e0f0"></div><div style="left:143px;top:360px;width:5px;height:5px;background:#f2f5fa"></div><div style="left:143px;top:365px;width:5px;height:5px;background:#a9c1e5"></div><div style="left:143px;top:370px;width:5px;height:4px;background:#d6e0f0"></div><div style="left:148px;top:360px;width:5px;height:5px;background:#dbe4f2"></div><div style="left:148px;top:365px;width:5px;height:5px;background:#c0d2ec"></div><div style="left:148px;top:370px;width:5px;height:4px;background:#d0dcee"></div><div style="left:153px;top:360px;width:5px;height:5px;background:#dbe4f2"></div><div style="left:153px;top:365px;width:5px;height:5px;background:#d5e0f0"></div><div style="left:153px;top:370px;width:5px;height:4px;background:#d6e0f0"></div><div style="left:158px;top:360px;width:5px;height:5px;background:#dbe4f2"></div><div style="left:158px;top:365px;width:5px;height:5px;background:#a9c1e5"></div><div style="left:158px;top:370px;width:5px;height:4px;background:#d0dcee"></div><div style="left:163px;top:360px;width:5px;height:5px;background:#e6ecf6"></div><div style="left:163px;top:365px;width:5px;height:5px;background:#a9c1e5"></div><div style="left:163px;top:370px;width:5px;height:4px;background:#d3def0"></div><div style="left:168px;top:360px;width:5px;height:5px;background:#dbe4f2"></div><div style="left:168px;top:365px;width:5px;height:5px;background:#c0d2ec"></div><div style="left:168px;top:370px;width:5px;height:4px;background:#d3def0"></div><div style="left:173px;top:360px;width:5px;height:5px;background:#f2f5fa"></div><div style="left:173px;top:365px;width:5px;height:5px;background:#c6d6ee"></div><div style="left:173px;top:370px;width:5px;height:4px;background:#d3def0"></div><div style="left:178px;top:360px;width:5px;height:5px;background:#e9eef7"></div><div style="left:178px;top:365px;width:5px;height:5px;background:#b2c8e8"></div><div style="left:178px;top:370px;width:5px;height:4px;background:#d3def0"></div><div style="left:183px;top:360px;width:5px;height:5px;background:#dbe4f2"></div><div style="left:183px;top:365px;width:5px;height:5px;background:#b2c8e8"></div><div style="left:183px;top:370px;width:5px;height:4px;background:#d3def0"></div><div style="left:188px;top:360px;width:5px;height:5px;background:#cfdcee"></div><div style="left:188px;top:365px;width:5px;height:5px;background:#c6d6ee"></div><div style="left:188px;top:370px;width:5px;height:4px;background:#d0dcee"></div><div style="left:193px;top:360px;width:5px;height:5px;background:#f2f5fa"></div><div style="left:193px;top:365px;width:5px;height:5px;background:#9db7e1"></div><div style="left:193px;top:370px;width:5px;height:4px;background:#d3def0"></div><div style="left:198px;top:360px;width:5px;height:5px;background:#dbe4f2"></div><div style="left:198px;top:365px;width:5px;height:5px;background:#c6d6ee"></div><div style="left:198px;top:370px;width:5px;height:4px;background:#d0dcee"></div><div style="left:203px;top:360px;width:5px;height:5px;background:#f2f5fa"></div><div style="left:203px;top:365px;width:5px;height:5px;background:#c6d6ee"></div><div style="left:203px;top:370px;width:5px;height:4px;background:#d0dcee"></div><div style="left:208px;top:360px;width:5px;height:5px;background:#e9eef7"></div><div style="left:208px;top:365px;width:5px;height:5px;background:#b2c8e8"></div><div style="left:208px;top:370px;width:5px;height:4px;background:#cddbee"></div><div style="left:213px;top:360px;width:5px;height:5px;background:#e6ecf6"></div><div style="left:213px;top:365px;width:5px;height:5px;background:#c6d6ee"></div><div style="left:213px;top:370px;width:5px;height:4px;background:#cddbee"></div><div style="left:218px;top:360px;width:5px;height:5px;background:#f2f5fa"></div><div style="left:218px;top:365px;width:5px;height:5px;background:#9db7e1"></div><div style="left:218px;top:370px;width:5px;height:4px;background:#cddbee"></div><div style="left:223px;top:360px;width:5px;height:5px;background:#dbe4f2"></div><div style="left:223px;top:365px;width:5px;height:5px;background:#9db7e1"></div><div style="left:223px;top:370px;width:5px;height:4px;background:#d6e0f0"></div><div style="left:228px;top:360px;width:5px;height:5px;background:#d6e1f1"></div><div style="left:228px;top:365px;width:5px;height:5px;background:#a9c1e5"></div><div style="left:228px;top:370px;width:5px;height:4px;background:#d0dcee"></div><div style="left:233px;top:360px;width:5px;height:5px;background:#f2f5fa"></div><div style="left:233px;top:365px;width:5px;height:5px;background:#b8cce8"></div><div style="left:233px;top:370px;width:5px;height:4px;background:#cddbee"></div><div style="left:238px;top:360px;width:5px;height:5px;background:#cfdcee"></div><div style="left:238px;top:365px;width:5px;height:5px;background:#b8cce8"></div><div style="left:238px;top:370px;width:5px;height:4px;background:#d6e0f0"></div><div style="left:243px;top:360px;width:5px;height:5px;background:#f2f5fa"></div><div style="left:243px;top:365px;width:5px;height:5px;background:#9db7e1"></div><div style="left:243px;top:370px;width:5px;height:4px;background:#d0dcee"></div><div style="left:248px;top:360px;width:5px;height:5px;background:#cfdcee"></div><div style="left:248px;top:365px;width:5px;height:5px;background:#b8cce8"></div><div style="left:248px;top:370px;width:5px;height:4px;background:#d3def0"></div><div style="left:253px;top:360px;width:5px;height:5px;background:#e9eef7"></div><div style="left:253px;top:365px;width:5px;height:5px;background:#a9c1e5"></div><div style="left:253px;top:370px;width:5px;height:4px;background:#d0dcee"></div><div style="left:258px;top:360px;width:5px;height:5px;background:#dbe4f2"></div><div style="left:258px;top:365px;width:5px;height:5px;background:#c0d2ec"></div><div style="left:258px;top:370px;width:5px;height:4px;background:#d6e0f0"></div><div style="left:263px;top:360px;width:5px;height:5px;background:#f2f5fa"></div><div style="left:263px;top:365px;width:5px;height:5px;background:#d5e0f0"></div><div style="left:263px;top:370px;width:5px;height:4px;background:#cddbee"></div><div style="left:268px;top:360px;width:3px;height:5px;background:#e9eef7"></div><div style="left:268px;top:365px;width:3px;height:5px;background:#c6d6ee"></div><div style="left:268px;top:370px;width:3px;height:4px;background:#d6e0f0"></div>
<div class="inp" style="left:100px;top:382px;width:350px;height:22px;background:#fff;border-color:#a5a5a5"></div>
<div class="t" style="left:465.5px;top:190px;">Klant / Prospect</div>
<div class="t" style="left:465.5px;top:214px;">Oud relatienr</div>
<div class="t" style="left:465.5px;top:238px;">Telefoon</div>
<div class="t" style="left:465.5px;top:266px;">Telefax</div>
<div class="t" style="left:465.5px;top:294px;">Gsm</div>
<div class="inp" style="left:561px;top:186px;width:151px;height:18px;background:#fff;border-color:#a5a5a5"></div>
<div class="t" style="left:564px;top:190px;">Klant</div>
<div class="arr" style="left:702.5px;top:194.5px;border-top-color:#5a5a5a"></div>
<div class="inp" style="left:561px;top:210px;width:151px;height:18px;background:#fff;border-color:#a5a5a5"></div>
<div class="inp" style="left:561px;top:234px;width:151px;height:22px;background:#fff;border-color:#a5a5a5"></div>
<div class="inp" style="left:561px;top:262px;width:151px;height:22px;background:#fff;border-color:#a5a5a5"></div>
<div class="inp" style="left:561px;top:290px;width:151px;height:22px;background:#fff;border-color:#a5a5a5"></div>
<div class="t" style="left:729.5px;top:202px;">Code<svg class="st" width="7" height="7" viewBox="0 0 7 7"><path d="M3.5 0 V7 M0.3 1.6 L6.7 5.4 M0.3 5.4 L6.7 1.6" stroke="#f00" stroke-width="1.5"/></svg></div>
<div class="t" style="left:729.5px;top:236px;">Omzet actief boekjaar</div>
<div class="t" style="left:729.5px;top:260px;">Btw actief boekjaar</div>
<div class="t" style="left:729.5px;top:284px;">Saldo actief boekjaar</div>
<div class="t" style="left:729.5px;top:308px;">Vervallen actief boekjaar</div>
<div class="t" style="left:729.5px;top:332px;">Gem. betalingstermijn</div>
<div class="t" style="left:729.5px;top:356px;">Max. betalingstermijn</div>
<div class="inp" style="left:869px;top:198px;width:118px;height:18px;background:#f0f0f0;border-color:#a5a5a5"></div>
<div class="t" style="left:872.5px;top:202px;letter-spacing:0.3px">010037</div>
<div class="inp" style="left:869px;top:232px;width:118px;height:18px;background:#f0f0f0;border-color:#a5a5a5"></div>
<div class="t" style="left:784.5px;top:236px;width:200px;text-align:right;letter-spacing:0.3px">1.899,80</div>
<div class="inp" style="left:869px;top:256px;width:118px;height:18px;background:#f0f0f0;border-color:#a5a5a5"></div>
<div class="t" style="left:784.5px;top:260px;width:200px;text-align:right;letter-spacing:0.3px">398,96</div>
<div class="inp" style="left:869px;top:280px;width:118px;height:18px;background:#f0f0f0;border-color:#a5a5a5"></div>
<div class="t" style="left:784.5px;top:284px;width:200px;text-align:right;letter-spacing:0.3px">8.517,03</div>
<div class="inp" style="left:869px;top:304px;width:118px;height:18px;background:#f0f0f0;border-color:#a5a5a5"></div>
<div class="t" style="left:784.5px;top:308px;width:200px;text-align:right;letter-spacing:0.3px">8.033,03</div>
<div class="inp" style="left:869px;top:328px;width:118px;height:18px;background:#f0f0f0;border-color:#a5a5a5"></div>
<div class="t" style="left:784.5px;top:332px;width:200px;text-align:right;letter-spacing:0.3px">0</div>
<div class="inp" style="left:869px;top:352px;width:118px;height:18px;background:#f0f0f0;border-color:#a5a5a5"></div>
<div class="t" style="left:784.5px;top:356px;width:200px;text-align:right;letter-spacing:0.3px">0</div>
<svg style="left:431px;top:356px" width="20" height="18" viewBox="0 0 20 18"><path d="M5.5 7.5 L9.5 2.5 H14.5 L18.5 7.5 V14.5 H5.5 Z" fill="#eef2fa" stroke="#24324e" stroke-width="1"/><path d="M5.5 7.5 L12 11.5 L18.5 7.5" fill="none" stroke="#9aa8c0" stroke-width=".7"/><rect x="14" y="8" width="2.2" height="2.2" fill="#e02020"/><path d="M2.5 7.5 H10.5 V16.5 H2.5 Z" fill="#f6f9fd" stroke="#24324e" stroke-width="1"/><path d="M4 10.5 H9 M4 12.5 H9 M4 14.5 H9" stroke="#6a96e0" stroke-width=".6"/></svg><svg style="left:433px;top:386px" width="16" height="16" viewBox="0 0 16 16"><rect x="10.5" y="0.5" width="2" height="5" fill="#8a1a10"/><path d="M2.5 7.5 L8 2.5 L13.5 7.5 V14.5 H2.5 Z" fill="#f4f6fa" stroke="#1a2a40" stroke-width="1"/><path d="M0.9 8.6 L8 1.6 L15.1 8.6" stroke="#1a2a40" stroke-width="2.6" fill="none"/><path d="M0.9 8.6 L8 1.6 L15.1 8.6" stroke="#f0b020" stroke-width="1.5" fill="none" stroke-dasharray="1.3 .5"/><rect x="6.3" y="9.5" width="3.4" height="5" fill="#f0b010" stroke="#8a6a10" stroke-width=".5"/></svg><svg style="left:696px;top:239px" width="14" height="14" viewBox="0 0 14 14"><path d="M3 11.5 Q9.5 11 11.5 3" stroke="#8c8c8c" stroke-width="2.4" fill="none" stroke-linecap="round"/><ellipse cx="3.3" cy="11.2" rx="2.4" ry="1.7" transform="rotate(-40 3.3 11.2)" fill="#8c8c8c"/><ellipse cx="11.6" cy="3.2" rx="2.4" ry="1.7" transform="rotate(-55 11.6 3.2)" fill="#8c8c8c"/></svg><svg style="left:696px;top:267px" width="14" height="14" viewBox="0 0 14 14"><path d="M3 11.5 Q9.5 11 11.5 3" stroke="#8c8c8c" stroke-width="2.4" fill="none" stroke-linecap="round"/><ellipse cx="3.3" cy="11.2" rx="2.4" ry="1.7" transform="rotate(-40 3.3 11.2)" fill="#8c8c8c"/><ellipse cx="11.6" cy="3.2" rx="2.4" ry="1.7" transform="rotate(-55 11.6 3.2)" fill="#8c8c8c"/></svg><svg style="left:696px;top:295px" width="14" height="14" viewBox="0 0 14 14"><path d="M3 11.5 Q9.5 11 11.5 3" stroke="#8c8c8c" stroke-width="2.4" fill="none" stroke-linecap="round"/><ellipse cx="3.3" cy="11.2" rx="2.4" ry="1.7" transform="rotate(-40 3.3 11.2)" fill="#8c8c8c"/><ellipse cx="11.6" cy="3.2" rx="2.4" ry="1.7" transform="rotate(-55 11.6 3.2)" fill="#8c8c8c"/></svg><svg style="left:298px;top:655px" width="19" height="16" viewBox="0 0 19 16"><path d="M1.5 7.5 L5 4.5 L8.5 8.5 L15.5 1.5 L18.5 4.5 L8.5 14.5 Z" fill="url(#chk)" stroke="#2f7a1a" stroke-width=".8" stroke-linejoin="round"/></svg>
<svg style="left:911px;top:393px" width="13" height="20" viewBox="0 0 13 20"><path d="M0.5 0.5 L0.5 16 L4 12.5 L6.5 18.5 L9 17.5 L6.5 11.5 L11.5 11.5 Z" fill="#fff" stroke="#111" stroke-width="1"/></svg>
<div style="left:98px;top:441px;width:1193px;height:1px;background:#a5a5a5"></div>
<div style="left:98px;top:420px;width:40px;height:20px;background:#dcdcdc;border:1px solid #a5a5a5;border-bottom:none;box-shadow:inset 1px 1px 0 #e6e6e6,inset -1px 0 0 #e6e6e6"></div>
<div class="t" style="left:102.7px;top:425px;">CRM</div>
<div style="left:140px;top:420px;width:117px;height:20px;background:#dcdcdc;border:1px solid #a5a5a5;border-bottom:none;box-shadow:inset 1px 1px 0 #e6e6e6,inset -1px 0 0 #e6e6e6"></div>
<div class="t" style="left:160.7px;top:425px;">Contactpersonen</div>
<div style="left:259px;top:420px;width:72px;height:20px;background:#dcdcdc;border:1px solid #a5a5a5;border-bottom:none;box-shadow:inset 1px 1px 0 #e6e6e6,inset -1px 0 0 #e6e6e6"></div>
<div class="t" style="left:264.9px;top:425px;">Verzending</div>
<div style="left:333px;top:420px;width:42px;height:20px;background:#dcdcdc;border:1px solid #a5a5a5;border-bottom:none;box-shadow:inset 1px 1px 0 #e6e6e6,inset -1px 0 0 #e6e6e6"></div>
<div class="t" style="left:338px;top:425px;">Uren</div>
<div style="left:377px;top:420px;width:56px;height:20px;background:#dcdcdc;border:1px solid #a5a5a5;border-bottom:none;box-shadow:inset 1px 1px 0 #e6e6e6,inset -1px 0 0 #e6e6e6"></div>
<div class="t" style="left:382.8px;top:425px;">Agenda</div>
<div style="left:435px;top:420px;width:65px;height:20px;background:#dcdcdc;border:1px solid #a5a5a5;border-bottom:none;box-shadow:inset 1px 1px 0 #e6e6e6,inset -1px 0 0 #e6e6e6"></div>
<div class="t" style="left:440.6px;top:425px;">Overzicht</div>
<div style="left:502px;top:420px;width:84px;height:20px;background:#dcdcdc;border:1px solid #a5a5a5;border-bottom:none;box-shadow:inset 1px 1px 0 #e6e6e6,inset -1px 0 0 #e6e6e6"></div>
<div class="t" style="left:508px;top:425px;">Aanmaningen</div>
<div style="left:588px;top:420px;width:106px;height:20px;background:#dcdcdc;border:1px solid #a5a5a5;border-bottom:none;box-shadow:inset 1px 1px 0 #e6e6e6,inset -1px 0 0 #e6e6e6"></div>
<div class="t" style="left:593.5px;top:425px;">Standaardboeking</div>
<div style="left:696px;top:420px;width:107px;height:20px;background:#dcdcdc;border:1px solid #a5a5a5;border-bottom:none;box-shadow:inset 1px 1px 0 #e6e6e6,inset -1px 0 0 #e6e6e6"></div>
<div class="t" style="left:701px;top:425px;">Kortingen / Prijzen</div>
<div style="left:805px;top:420px;width:60px;height:20px;background:#dcdcdc;border:1px solid #a5a5a5;border-bottom:none;box-shadow:inset 1px 1px 0 #e6e6e6,inset -1px 0 0 #e6e6e6"></div>
<div class="t" style="left:810px;top:425px;">Historiek</div>
<div style="left:867px;top:420px;width:48px;height:20px;background:#dcdcdc;border:1px solid #a5a5a5;border-bottom:none;box-shadow:inset 1px 1px 0 #e6e6e6,inset -1px 0 0 #e6e6e6"></div>
<div class="t" style="left:872.5px;top:425px;">Taken</div>
<div style="left:917px;top:420px;width:86px;height:20px;background:#dcdcdc;border:1px solid #a5a5a5;border-bottom:none;box-shadow:inset 1px 1px 0 #e6e6e6,inset -1px 0 0 #e6e6e6"></div>
<div class="t" style="left:922.4px;top:425px;">Interne memo</div>
<div style="left:1005px;top:420px;width:73px;height:20px;background:#dcdcdc;border:1px solid #a5a5a5;border-bottom:none;box-shadow:inset 1px 1px 0 #e6e6e6,inset -1px 0 0 #e6e6e6"></div>
<div class="t" style="left:1010.6px;top:425px;">Contracten</div>
<div style="left:1080px;top:420px;width:80px;height:20px;background:#dcdcdc;border:1px solid #a5a5a5;border-bottom:none;box-shadow:inset 1px 1px 0 #e6e6e6,inset -1px 0 0 #e6e6e6"></div>
<div class="t" style="left:1085.3px;top:425px;">Klantenkaart</div>
<div style="left:1162px;top:420px;width:87px;height:20px;background:#dcdcdc;border:1px solid #a5a5a5;border-bottom:none;box-shadow:inset 1px 1px 0 #e6e6e6,inset -1px 0 0 #e6e6e6"></div>
<div class="t" style="left:1167.5px;top:425px;">Communicator</div>
<svg style="left:146px;top:424px" width="13" height="12" viewBox="0 0 13 12"><path d="M6.5 0.8 L12.3 11.2 L0.7 11.2 Z" fill="#ffe600" stroke="#222" stroke-width="1" stroke-linejoin="round"/><path d="M6.5 4 V8" stroke="#111" stroke-width="1.6"/><circle cx="6.5" cy="9.6" r="0.8" fill="#111"/></svg>
<div style="left:3px;top:418px;width:94px;height:23px;background:#f0f0f0;border:1px solid #a5a5a5;border-bottom:none"></div>
<div class="t" style="left:10.5px;top:424.5px;">Basisgegevens</div>
<div style="left:2px;top:160px;width:1px;height:702px;background:#a5a5a5"></div>
<div style="left:1px;top:160px;width:1px;height:702px;background:#c4c4c4"></div>
<div style="left:8px;top:470px;width:1283px;height:1px;background:#a5a5a5"></div>
<div style="left:9px;top:449px;width:65px;height:20px;background:#dcdcdc;border:1px solid #a5a5a5;border-bottom:none;box-shadow:inset 1px 1px 0 #e6e6e6,inset -1px 0 0 #e6e6e6"></div>
<div class="t" style="left:14.5px;top:454px;">Algemeen</div>
<div style="left:168px;top:449px;width:85px;height:20px;background:#dcdcdc;border:1px solid #a5a5a5;border-bottom:none;box-shadow:inset 1px 1px 0 #e6e6e6,inset -1px 0 0 #e6e6e6"></div>
<div class="t" style="left:172.6px;top:454px;">CompanyWeb</div>
<div style="left:255px;top:449px;width:57px;height:20px;background:#dcdcdc;border:1px solid #a5a5a5;border-bottom:none;box-shadow:inset 1px 1px 0 #e6e6e6,inset -1px 0 0 #e6e6e6"></div>
<div class="t" style="left:260.8px;top:454px;">Teksten</div>
<div style="left:314px;top:449px;width:67px;height:20px;background:#dcdcdc;border:1px solid #a5a5a5;border-bottom:none;box-shadow:inset 1px 1px 0 #e6e6e6,inset -1px 0 0 #e6e6e6"></div>
<div class="t" style="left:320px;top:454px;">Weblogins</div>
<div style="left:383px;top:449px;width:78px;height:20px;background:#dcdcdc;border:1px solid #a5a5a5;border-bottom:none;box-shadow:inset 1px 1px 0 #e6e6e6,inset -1px 0 0 #e6e6e6"></div>
<div class="t" style="left:389.6px;top:454px;">Koppelingen</div>
<div style="left:75px;top:447px;width:92px;height:24px;background:#f0f0f0;border:1px solid #a5a5a5;border-bottom:none"></div>
<div class="t" style="left:82.5px;top:453.5px;">Facturatie</div>
<svg style="left:152.5px;top:456px" width="7" height="7"><path d="M0.5 0.5 L6.5 6.5 M6.5 0.5 L0.5 6.5" stroke="#666" stroke-width="1.1"/></svg>
<div style="left:7px;top:470px;width:1px;height:392px;background:#a5a5a5"></div>
<div class="t" style="left:15.5px;top:487px;">Valuta<svg class="st" width="7" height="7" viewBox="0 0 7 7"><path d="M3.5 0 V7 M0.3 1.6 L6.7 5.4 M0.3 5.4 L6.7 1.6" stroke="#f00" stroke-width="1.5"/></svg></div>
<div class="t" style="left:15.5px;top:511px;">Verzamelfacturatie<svg class="st" width="7" height="7" viewBox="0 0 7 7"><path d="M3.5 0 V7 M0.3 1.6 L6.7 5.4 M0.3 5.4 L6.7 1.6" stroke="#f00" stroke-width="1.5"/></svg></div>
<div class="t" style="left:15.5px;top:535px;">Zendwijze factuur<svg class="st" width="7" height="7" viewBox="0 0 7 7"><path d="M3.5 0 V7 M0.3 1.6 L6.7 5.4 M0.3 5.4 L6.7 1.6" stroke="#f00" stroke-width="1.5"/></svg></div>
<div class="t" style="left:15.5px;top:559px;">Faktureren aan</div>
<div class="t" style="left:15.5px;top:583px;">Factoringmaatschappij</div>
<div class="t" style="left:15.5px;top:607px;">Overheidsinstelling<svg class="st" width="7" height="7" viewBox="0 0 7 7"><path d="M3.5 0 V7 M0.3 1.6 L6.7 5.4 M0.3 5.4 L6.7 1.6" stroke="#f00" stroke-width="1.5"/></svg></div>
<div class="t" style="left:15.5px;top:631px;">Peppol via GLN-nummer<svg class="st" width="7" height="7" viewBox="0 0 7 7"><path d="M3.5 0 V7 M0.3 1.6 L6.7 5.4 M0.3 5.4 L6.7 1.6" stroke="#f00" stroke-width="1.5"/></svg></div>
<div class="t" style="left:15.5px;top:655px;">Via provider met</div>
<div class="t" style="left:15.5px;top:683px;">E-factuur goedgekeurd op</div>
<div class="inp" style="left:168px;top:483px;width:146px;height:18px;background:#fff;border-color:#a5a5a5"></div>
<div class="t" style="left:171.5px;top:487px;">Euro</div>
<div class="arr" style="left:304.5px;top:491.5px;border-top-color:#5a5a5a"></div>
<div class="inp" style="left:171px;top:510px;width:12px;height:12px;background:#fff;border-color:#a0a0a0"></div>
<svg style="left:174px;top:514px" width="9" height="7"><path d="M0.5 3 L3 5.5 L8 0.5" fill="none" stroke="#777" stroke-width="1.2"/></svg>
<div class="inp" style="left:168px;top:531px;width:191px;height:18px;background:#fff;border-color:#a5a5a5"></div>
<div class="t" style="left:171.5px;top:535px;">Peppol &amp; Print</div>
<div class="arr" style="left:349.0px;top:539.5px;border-top-color:#5a5a5a"></div>
<div class="inp" style="left:168px;top:555px;width:248px;height:18px;background:#fff;border-color:#a5a5a5"></div>
<div class="arr" style="left:406.5px;top:563.5px;border-top-color:#5a5a5a"></div>
<div class="inp" style="left:168px;top:579px;width:248px;height:18px;background:#fff;border-color:#a5a5a5"></div>
<div class="arr" style="left:406.5px;top:587.5px;border-top-color:#5a5a5a"></div>
<div class="inp" style="left:171px;top:606px;width:12px;height:12px;background:#fff;border-color:#a0a0a0"></div>
<svg style="left:174px;top:610px" width="9" height="7"><path d="M0.5 3 L3 5.5 L8 0.5" fill="none" stroke="#777" stroke-width="1.2"/></svg>
<div class="inp" style="left:171px;top:630px;width:12px;height:12px;background:#fff;border-color:#a0a0a0"></div>
<div class="inp" style="left:171px;top:651px;width:146px;height:22px;background:#efefef;border-color:#c8c8c8"></div>
<div class="t" style="left:174.5px;top:656px;letter-spacing:-0.7px">PEPPOL</div>
<svg style="left:300px;top:655px" width="16" height="14" viewBox="0 0 16 14"><path d="M1 7.5 L5.5 12.5 L15 2.5 L13 1 L5.5 8.5 L3 5.5 Z" fill="#5fbf2a" stroke="#3c8f1a" stroke-width=".6"/></svg>
<div class="inp" style="left:171px;top:679px;width:146px;height:18px;background:#f0f0f0;border-color:#a5a5a5"></div>
<div class="t" style="left:99.5px;top:683px;width:200px;text-align:right;letter-spacing:0.2px">06/08/2025</div>
<div class="arr" style="left:307.5px;top:687.5px;border-top-color:#bbb"></div>
<div class="inp" style="left:322px;top:678px;width:268px;height:20px;background:#f0f0f0;border-color:#f0f0f0"></div>
<div class="t" style="left:326.5px;top:683px;letter-spacing:-0.1px">0208:</div>
<div style="left:355px;top:684px;width:5px;height:5px;background:#b2b4bc"></div><div style="left:355px;top:689px;width:5px;height:5px;background:#d4d4d4"></div><div style="left:360px;top:684px;width:5px;height:5px;background:#d0d0c8"></div><div style="left:360px;top:689px;width:5px;height:5px;background:#bcbcbe"></div><div style="left:365px;top:684px;width:5px;height:5px;background:#999999"></div><div style="left:365px;top:689px;width:5px;height:5px;background:#d8d0c4"></div><div style="left:370px;top:684px;width:5px;height:5px;background:#a9a3aa"></div><div style="left:370px;top:689px;width:5px;height:5px;background:#b4aaaa"></div><div style="left:375px;top:684px;width:5px;height:5px;background:#a89ca4"></div><div style="left:375px;top:689px;width:5px;height:5px;background:#b2b4bc"></div><div style="left:380px;top:684px;width:5px;height:5px;background:#d4d4d4"></div><div style="left:380px;top:689px;width:5px;height:5px;background:#bdbec2"></div><div style="left:385px;top:684px;width:5px;height:5px;background:#b4aaaa"></div><div style="left:385px;top:689px;width:5px;height:5px;background:#c8ccd0"></div><div style="left:390px;top:684px;width:5px;height:5px;background:#d4d4d4"></div><div style="left:390px;top:689px;width:5px;height:5px;background:#b9b8bc"></div><div style="left:395px;top:684px;width:5px;height:5px;background:#d0d4e0"></div><div style="left:395px;top:689px;width:5px;height:5px;background:#d8d0c4"></div><div style="left:400px;top:684px;width:5px;height:5px;background:#b2b4bc"></div><div style="left:400px;top:689px;width:5px;height:5px;background:#b4b0b0"></div><div style="left:405px;top:684px;width:5px;height:5px;background:#d8d0c4"></div><div style="left:405px;top:689px;width:5px;height:5px;background:#d8d0c4"></div><div style="left:410px;top:684px;width:5px;height:5px;background:#a8a6a6"></div><div style="left:410px;top:689px;width:5px;height:5px;background:#b9b8bc"></div><div style="left:415px;top:684px;width:3px;height:5px;background:#c4c2c2"></div><div style="left:415px;top:689px;width:3px;height:5px;background:#999999"></div>
<div class="t" style="left:591.5px;top:487px;">BTW Verlaagd ?<svg class="st" width="7" height="7" viewBox="0 0 7 7"><path d="M3.5 0 V7 M0.3 1.6 L6.7 5.4 M0.3 5.4 L6.7 1.6" stroke="#f00" stroke-width="1.5"/></svg></div>
<div class="t" style="left:591.5px;top:535px;">Domicilieringsmandaat</div>
<div class="t" style="left:591.5px;top:559px;">Kredietlimiet<svg class="st" width="7" height="7" viewBox="0 0 7 7"><path d="M3.5 0 V7 M0.3 1.6 L6.7 5.4 M0.3 5.4 L6.7 1.6" stroke="#f00" stroke-width="1.5"/></svg></div>
<div class="t" style="left:591.5px;top:583px;">Datum kredietcontr.</div>
<div class="t" style="left:591.5px;top:607px;">Zendwijze aanmaning<svg class="st" width="7" height="7" viewBox="0 0 7 7"><path d="M3.5 0 V7 M0.3 1.6 L6.7 5.4 M0.3 5.4 L6.7 1.6" stroke="#f00" stroke-width="1.5"/></svg></div>
<div class="inp" style="left:744px;top:483px;width:130px;height:18px;background:#fff;border-color:#a5a5a5"></div>
<div class="t" style="left:747.5px;top:487px;">Niet van toepassing</div>
<div class="arr" style="left:863.5px;top:491.5px;border-top-color:#5a5a5a"></div>
<div class="inp" style="left:744px;top:531px;width:129px;height:18px;background:#f0f0f0;border-color:#a5a5a5"></div>
<div class="inp" style="left:744px;top:555px;width:129px;height:18px;background:#fff;border-color:#a5a5a5"></div>
<div class="t" style="left:670.5px;top:559px;width:200px;text-align:right;letter-spacing:0.3px">0,00</div>
<div class="inp" style="left:744px;top:579px;width:129px;height:18px;background:#fff;border-color:#a5a5a5"></div>
<div class="arr" style="left:863.0px;top:587.5px;border-top-color:#5a5a5a"></div>
<div class="inp" style="left:744px;top:603px;width:129px;height:18px;background:#fff;border-color:#a5a5a5"></div>
<div class="t" style="left:747.5px;top:607px;">Mail</div>
<div class="arr" style="left:863.0px;top:611.5px;border-top-color:#5a5a5a"></div>
<div style="left:11px;top:601px;width:173px;height:19px;border:3px solid #00c800"></div>
<div style="left:11px;top:624px;width:173px;height:19px;border:3px solid #00c800"></div>
<div style="left:322px;top:678px;width:264px;height:16px;border:3px solid #00c800"></div>
<div style="left:194.6px;top:598.7px;width:30px;height:30px;border-radius:50%;background:#00c800;color:#fff;font-size:17px;line-height:31px;text-align:center">1</div>
<div style="left:194.6px;top:622.9px;width:30px;height:30px;border-radius:50%;background:#00c800;color:#fff;font-size:17px;line-height:31px;text-align:center">2</div>
<div style="left:596.5px;top:674.6px;width:30px;height:30px;border-radius:50%;background:#00c800;color:#fff;font-size:17px;line-height:31px;text-align:center">3</div>
<div class="t" style="left:16.3px;top:717px;font-weight:bold;color:#a3a3a3;font-size:11.5px;letter-spacing:0.2px">Documenten</div>
<div style="left:16px;top:737px;width:903px;height:90px;background:#fff;border:2px solid #a0a0a0"></div>
<div style="left:18px;top:739px;width:903px;height:22px;background:#f0f0f0"></div>
<div style="left:18px;top:761px;width:903px;height:1px;background:#a0a0a0"></div>
<div style="left:52px;top:739px;width:1px;height:22px;background:#a0a0a0"></div>
<div style="left:52px;top:762px;width:1px;height:20px;background:#cfcfcf"></div>
<div style="left:151px;top:739px;width:1px;height:22px;background:#a0a0a0"></div>
<div style="left:151px;top:762px;width:1px;height:20px;background:#cfcfcf"></div>
<div style="left:276px;top:739px;width:1px;height:22px;background:#a0a0a0"></div>
<div style="left:276px;top:762px;width:1px;height:20px;background:#cfcfcf"></div>
<div style="left:400px;top:739px;width:1px;height:22px;background:#a0a0a0"></div>
<div style="left:400px;top:762px;width:1px;height:20px;background:#cfcfcf"></div>
<div style="left:485px;top:739px;width:1px;height:22px;background:#a0a0a0"></div>
<div style="left:485px;top:762px;width:1px;height:20px;background:#cfcfcf"></div>
<div style="left:570px;top:739px;width:1px;height:22px;background:#a0a0a0"></div>
<div style="left:570px;top:762px;width:1px;height:20px;background:#cfcfcf"></div>
<div style="left:656px;top:739px;width:1px;height:22px;background:#a0a0a0"></div>
<div style="left:656px;top:762px;width:1px;height:20px;background:#cfcfcf"></div>
<div style="left:771px;top:739px;width:1px;height:22px;background:#a0a0a0"></div>
<div style="left:771px;top:762px;width:1px;height:20px;background:#cfcfcf"></div>
<div style="left:914px;top:739px;width:1px;height:22px;background:#a0a0a0"></div>
<div style="left:914px;top:762px;width:1px;height:20px;background:#cfcfcf"></div>
<div style="left:52px;top:782px;width:863px;height:1px;background:#cfcfcf"></div>
<div class="t" style="left:56.5px;top:744px;color:#707070">Soort Document</div>
<div class="t" style="left:156px;top:744px;color:#707070">Tabelnaam</div>
<div class="t" style="left:280.5px;top:744px;color:#707070">Layouts</div>
<div class="t" style="left:403.8px;top:744px;color:#707070">Aantal</div>
<div class="t" style="left:489.4px;top:744px;color:#707070">Geselecteerd</div>
<div class="t" style="left:574.5px;top:744px;color:#707070">Layout voor</div>
<div class="t" style="left:660.7px;top:744px;color:#707070">Leesbevestiging mail</div>
<div class="t" style="left:775.8px;top:744px;color:#707070">Ontvangstbevestiging mail</div>
<div class="t" style="left:281.5px;top:766px;width:200px;text-align:right;">0</div>
<div style="left:521px;top:765px;width:12px;height:12px;border:1px solid #8a8a8a;background:#fff"></div>
<div style="left:525px;top:769px;width:6px;height:6px;background:#6e6e6e"></div>
<div style="left:707px;top:765px;width:12px;height:12px;border:1px solid #8a8a8a;background:#fff"></div>
<div style="left:711px;top:769px;width:6px;height:6px;background:#6e6e6e"></div>
<div style="left:836px;top:765px;width:12px;height:12px;border:1px solid #8a8a8a;background:#fff"></div>
<div style="left:840px;top:769px;width:6px;height:6px;background:#6e6e6e"></div>
<svg style="left:23px;top:766px" width="12" height="12" viewBox="0 0 12 12"><g stroke="#f0902a" stroke-width="1"><path d="M6 1.5 V10.5 M1.5 6 H10.5 M2.8 2.8 L9.2 9.2 M9.2 2.8 L2.8 9.2"/></g><circle cx="6" cy="6" r="2.6" fill="#f0902a"/></svg>
</body></html>
